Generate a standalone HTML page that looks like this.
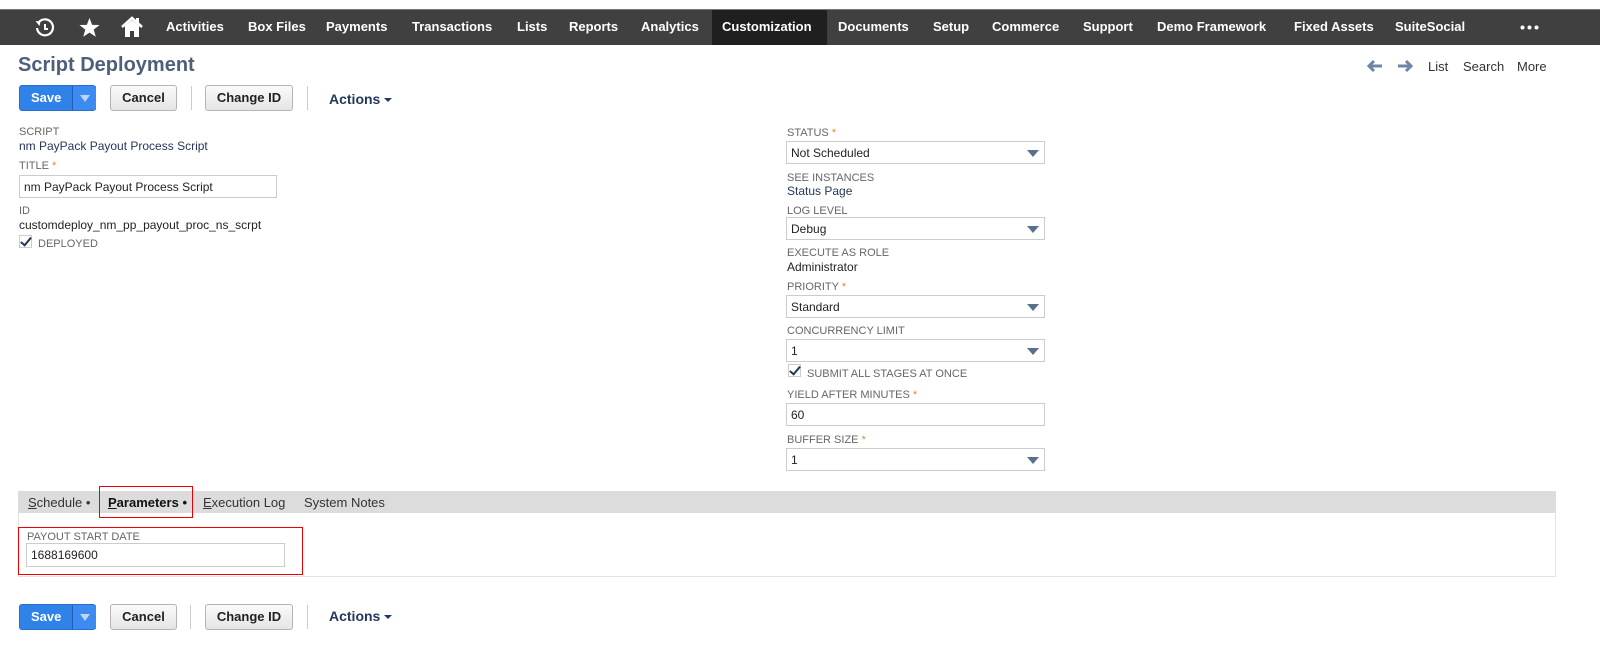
<!DOCTYPE html>
<html><head><style>
*{margin:0;padding:0;box-sizing:border-box}
body{width:1600px;height:662px;background:#fff;font-family:"Liberation Sans",Arial,sans-serif;position:relative;overflow:hidden;color:#222}
.nav{position:absolute;left:0;top:9px;width:1600px;height:36px;background:#404040;border-top:1px solid #777}
.nav span{position:absolute;top:9px;color:#fff;font-weight:bold;font-size:13px;white-space:nowrap}
.cust{position:absolute;left:712px;top:0;width:115px;height:35px;background:#1f1f1f}
.a{position:absolute;white-space:nowrap}
.lbl{font-size:11px;color:#666;text-transform:uppercase}
.star{color:#e08a2c;font-size:11px}
.val{font-size:12px;color:#222}
.link{font-size:12px;color:#24385b}
.inp{position:absolute;border:1px solid #ccc;background:#fff;font-size:12px;padding:4px 4px;height:23px}
.sel:after{content:"";position:absolute;right:5px;top:8px;border-left:6px solid transparent;border-right:6px solid transparent;border-top:7px solid #5a6f8c}
.btn{position:absolute;height:26px;border:1px solid #b5b5b5;border-radius:3px;background:linear-gradient(#fafafa,#e5e5e5);font-weight:bold;font-size:13px;text-align:center;line-height:24px;color:#222}
.save{position:absolute;height:26px;width:77px;border-radius:3px;background:#2f82e8;border:1px solid #2a6fcc;color:#fff;font-weight:bold;font-size:13px;line-height:24px}
.save b{position:absolute;left:11px}
.save i{position:absolute;left:52px;top:0;width:24px;height:24px;border-left:1px solid #1f5fb5;background:#3d8af0}
.save i:after{content:"";position:absolute;left:7px;top:9px;border-left:5px solid transparent;border-right:5px solid transparent;border-top:7px solid #bcd6f7}
.sep{position:absolute;width:1px;height:24px;background:#ccc}
.act{position:absolute;color:#24385b;font-weight:bold;font-size:14px}
.act:after{content:"";display:inline-block;margin-left:4px;vertical-align:middle;border-left:4px solid transparent;border-right:4px solid transparent;border-top:4px solid #24385b}
.cb{position:absolute;width:13px;height:13px;border:1px solid #ccc;background:#fff}
.cb:after{content:"";position:absolute;left:3px;top:-1px;width:4px;height:9px;border:solid #24385b;border-width:0 2.5px 2.5px 0;transform:rotate(40deg)}
</style></head><body>
<div class="nav">
<div class="cust"></div>
<svg style="position:absolute;left:34px;top:7px" width="22" height="22" viewBox="0 0 22 22"><path d="M5 5 A8 8 0 1 1 3 11" fill="none" stroke="#fff" stroke-width="2.2"/><path d="M1.5 4 L6.5 4.5 L5.5 9 Z" fill="#fff"/><path d="M11 7 V12 H14" fill="none" stroke="#fff" stroke-width="2"/></svg>
<svg style="position:absolute;left:79px;top:7px" width="21" height="21" viewBox="0 0 24 24"><path d="M12 1 L15 9 L23.5 9.2 L16.8 14.4 L19.2 22.6 L12 17.8 L4.8 22.6 L7.2 14.4 L0.5 9.2 L9 9 Z" fill="#fff"/></svg>
<svg style="position:absolute;left:120px;top:6px" width="24" height="22" viewBox="0 0 24 22"><path d="M2 11 L12 2 L22 11" fill="none" stroke="#fff" stroke-width="2.6"/><path d="M5 10 V21 H10 V15 H14 V21 H19 V10 L12 4 Z" fill="#fff"/><rect x="16" y="2" width="3" height="6" fill="#fff"/></svg>
<span style="left:166px">Activities</span><span style="left:248px">Box Files</span><span style="left:326px">Payments</span><span style="left:412px">Transactions</span><span style="left:517px">Lists</span><span style="left:569px">Reports</span><span style="left:641px">Analytics</span><span style="left:722px">Customization</span><span style="left:838px">Documents</span><span style="left:933px">Setup</span><span style="left:992px">Commerce</span><span style="left:1083px">Support</span><span style="left:1157px">Demo Framework</span><span style="left:1294px">Fixed Assets</span><span style="left:1395px">SuiteSocial</span>
<svg style="position:absolute;left:1520px;top:15px" width="20" height="5"><circle cx="2.5" cy="2.5" r="2" fill="#fff"/><circle cx="9.5" cy="2.5" r="2" fill="#fff"/><circle cx="16.5" cy="2.5" r="2" fill="#fff"/></svg>
</div>
<div class="a" style="left:18px;top:54px;font-size:20px;font-weight:bold;color:#4d5f79">Script Deployment</div>
<svg style="position:absolute;left:1367px;top:59px" width="16" height="14"><path d="M2 7 H15 M7 2 L2 7 L7 12" stroke="#6f85a6" stroke-width="3" fill="none"/></svg>
<svg style="position:absolute;left:1397px;top:59px" width="16" height="14"><path d="M1 7 H14 M9 2 L14 7 L9 12" stroke="#6f85a6" stroke-width="3" fill="none"/></svg>
<div class="a" style="left:1428px;top:59px;font-size:13px;color:#333">List</div>
<div class="a" style="left:1463px;top:59px;font-size:13px;color:#333">Search</div>
<div class="a" style="left:1517px;top:59px;font-size:13px;color:#333">More</div>

<div class="save" style="left:19px;top:85px"><b>Save</b><i></i></div>
<div class="btn" style="left:110px;top:85px;width:67px">Cancel</div>
<div class="sep" style="left:191px;top:86px"></div>
<div class="btn" style="left:205px;top:85px;width:88px">Change ID</div>
<div class="sep" style="left:307px;top:86px"></div>
<div class="act" style="left:329px;top:91px">Actions</div>

<div class="a lbl" style="left:19px;top:126px">Script</div>
<div class="a link" style="left:19px;top:139px">nm PayPack Payout Process Script</div>
<div class="a lbl" style="left:19px;top:160px">Title <span class="star">*</span></div>
<div class="inp" style="left:19px;top:175px;width:258px">nm PayPack Payout Process Script</div>
<div class="a lbl" style="left:19px;top:205px">ID</div>
<div class="a val" style="left:19px;top:218px">customdeploy_nm_pp_payout_proc_ns_scrpt</div>
<div class="cb" style="left:19px;top:235px"></div>
<div class="a lbl" style="left:38px;top:238px">Deployed</div>

<div class="a lbl" style="left:787px;top:127px">Status <span class="star">*</span></div>
<div class="inp sel" style="left:786px;top:141px;width:259px">Not Scheduled</div>
<div class="a lbl" style="left:787px;top:172px">See Instances</div>
<div class="a link" style="left:787px;top:184px">Status Page</div>
<div class="a lbl" style="left:787px;top:205px">Log Level</div>
<div class="inp sel" style="left:786px;top:217px;width:259px">Debug</div>
<div class="a lbl" style="left:787px;top:247px">Execute as Role</div>
<div class="a val" style="left:787px;top:260px">Administrator</div>
<div class="a lbl" style="left:787px;top:281px">Priority <span class="star">*</span></div>
<div class="inp sel" style="left:786px;top:295px;width:259px">Standard</div>
<div class="a lbl" style="left:787px;top:325px">Concurrency Limit</div>
<div class="inp sel" style="left:786px;top:339px;width:259px">1</div>
<div class="cb" style="left:788px;top:364px"></div>
<div class="a lbl" style="left:807px;top:368px">Submit all stages at once</div>
<div class="a lbl" style="left:787px;top:389px">Yield after minutes <span class="star">*</span></div>
<div class="inp" style="left:786px;top:403px;width:259px">60</div>
<div class="a lbl" style="left:787px;top:434px">Buffer Size <span class="star">*</span></div>
<div class="inp sel" style="left:786px;top:448px;width:259px">1</div>

<div style="position:absolute;left:18px;top:491px;width:1538px;height:22px;background:#dcdcdc"></div>
<div style="position:absolute;left:18px;top:513px;width:1538px;height:64px;border:1px solid #e2e2e2;border-top:none"></div>
<div class="a" style="left:28px;top:495px;font-size:13px;color:#333"><u>S</u>chedule •</div>
<div style="position:absolute;left:99px;top:486px;width:94px;height:32px;border:1px solid #e00"></div>
<div class="a" style="left:108px;top:495px;font-size:13px;font-weight:bold;color:#111"><u>P</u>arameters •</div>
<div class="a" style="left:203px;top:495px;font-size:13px;color:#333"><u>E</u>xecution Log</div>
<div class="a" style="left:304px;top:495px;font-size:13px;color:#333">System Notes</div>
<div style="position:absolute;left:18px;top:527px;width:285px;height:48px;border:1px solid #e00"></div>
<div class="a lbl" style="left:27px;top:531px">Payout Start Date</div>
<div class="inp" style="left:26px;top:543px;width:259px;height:24px">1688169600</div>

<div class="save" style="left:19px;top:604px"><b>Save</b><i></i></div>
<div class="btn" style="left:110px;top:604px;width:67px">Cancel</div>
<div class="sep" style="left:190px;top:605px"></div>
<div class="btn" style="left:205px;top:604px;width:88px">Change ID</div>
<div class="sep" style="left:307px;top:605px"></div>
<div class="act" style="left:329px;top:608px">Actions</div>
</body></html>
